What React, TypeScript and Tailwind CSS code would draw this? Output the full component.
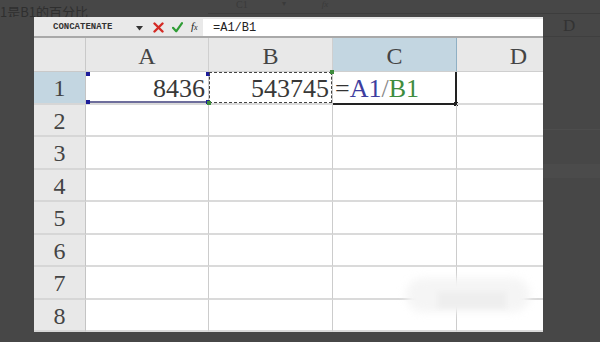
import React from "react";

const serif = { fontFamily: '"Liberation Serif", "Times New Roman", serif' };
const mono = { fontFamily: '"Liberation Mono", "Courier New", monospace' };

const cols = ["A", "B", "C", "D"];
const rows = [1, 2, 3, 4, 5, 6, 7, 8];

function Toolbar() {
  return (
    <div className="flex h-[21px] items-stretch border-b-2 border-[#a9a9a9] bg-[#e9e9e9]">
      <div className="flex w-[100px] items-center pl-[19px] pt-[1px]">
        <span className="text-[9px] font-bold leading-none text-[#333]" style={mono}>
          CONCATENATE
        </span>
      </div>
      <div className="flex w-[69px] items-center gap-[8px]">
        <svg width="7" height="5" viewBox="0 0 7 5" className="ml-[2px] mr-[2px] mt-[3px]">
          <path d="M0 0 L7 0 L3.5 4.5 Z" fill="#333" />
        </svg>
        <svg width="11" height="11" viewBox="0 0 11 11" className="mt-[1px]">
          <path d="M1.5 1.5 L9.5 9.5 M9.5 1.5 L1.5 9.5" stroke="#d42a24" strokeWidth="2.4" strokeLinecap="round" />
        </svg>
        <svg width="11" height="11" viewBox="0 0 11 11" className="mt-[1px]">
          <path d="M1 5.8 L4.2 9.3 L10 1.2" stroke="#2f9d35" strokeWidth="2.2" fill="none" strokeLinecap="round" strokeLinejoin="round" />
        </svg>
        <span className="text-[11px] italic leading-none text-[#222]" style={serif}>
          f<span className="text-[8px]">x</span>
        </span>
      </div>
      <div className="mt-[2px] flex flex-1 items-center bg-white pl-[10px]">
        <span className="text-[12px] leading-none text-[#222]" style={mono}>
          =A1/B1
        </span>
      </div>
    </div>
  );
}

function Handle({ className }: { className: string }) {
  return <div className={"absolute h-[4px] w-[4px] " + className} />;
}

function Sheet() {
  return (
    <div className="relative flex-1 overflow-hidden">
      <div className="grid w-[620px] grid-cols-[52px_123px_124px_124px_124px] grid-rows-[34px_repeat(8,32.5px)]">
        <div className="border-b border-r border-[#c9c9c9] bg-[#e8e8e8]" />
        {cols.map((c) => (
          <div
            key={c}
            className={
              "flex items-center justify-center border-b border-r border-[#cfcfcf] pt-[3px] text-[24px] leading-none text-[#444] " +
              (c === "C" ? "bg-[#c3d6e1] border-r-[#8fb0c4]" : "bg-[#e8e8e8]")
            }
          >
            {c}
          </div>
        ))}
        {rows.map((r) => (
          <React.Fragment key={r}>
            <div
              className={
                "flex items-center justify-center border-b-2 border-r border-b-[#d6d6d6] border-r-[#c4c4c4] pt-[2px] text-[24px] leading-none text-[#444] " +
                (r === 1 ? "bg-[#c3d6e1]" : "bg-[#e8e8e8]")
              }
            >
              {r}
            </div>
            {cols.map((c) => (
              <div
                key={c}
                className="relative flex items-center border-b-2 border-r border-b-[#dadada] border-r-[#cccccc] text-[26px] leading-none text-[#383838]"
              >
                {r === 1 && c === "A" && (
                  <>
                    <span className="ml-auto mr-[3px] pt-[3px]">8436</span>
                    <div className="pointer-events-none absolute inset-0 border-b-2 border-[#6e6e9c]">
                      <Handle className="left-0 top-0 bg-[#1d1d9a]" />
                      <Handle className="right-[-2px] top-0 bg-[#1d1d9a]" />
                      <Handle className="bottom-[-3px] left-0 bg-[#1d1d9a]" />
                      <Handle className="bottom-[-3px] right-[-2px] bg-[#1d1d9a]" />
                    </div>
                  </>
                )}
                {r === 1 && c === "B" && (
                  <>
                    <span className="ml-auto mr-[3px] pt-[3px]">543745</span>
                    <div className="pointer-events-none absolute inset-0 border border-dashed border-[#444]">
                      <Handle className="bottom-[-3px] left-[-3px] bg-[#3e8c3e]" />
                      <Handle className="right-[-3px] top-[-3px] bg-[#3e8c3e]" />
                    </div>
                  </>
                )}
                {r === 1 && c === "C" && (
                  <>
                    <span className="ml-[2px] pt-[3px]">
                      <span className="text-[#333]">=</span>
                      <span className="text-[#3d3d9e]">A1</span>
                      <span className="text-[#888]">/</span>
                      <span className="text-[#3e8c3e]">B1</span>
                    </span>
                    <div className="pointer-events-none absolute inset-[0_-1px_-2px_0] border-b-2 border-r-2 border-[#222]">
                      <div className="absolute bottom-[-3px] right-[-3px] h-[4px] w-[4px] bg-[#222]" />
                    </div>
                  </>
                )}
              </div>
            ))}
          </React.Fragment>
        ))}
      </div>
      {/* blurred watermark lying over the grid */}
      <div className="pointer-events-none absolute left-[372px] top-[240px] h-[34px] w-[124px] rounded-full bg-[#f5f5f5] blur-[4px]" />
      <div className="pointer-events-none absolute left-[404px] top-[254px] h-[16px] w-[68px] bg-[#eeeeee] blur-[2px]" />
    </div>
  );
}

export default function App() {
  return (
    <div className="flex h-[342px] w-[600px] flex-col overflow-hidden bg-[#474747]" style={serif}>
      {/* ghost strip behind, above the panel */}
      <div className="flex h-[17px] items-end overflow-hidden">
        <span
          className="mb-[-1px] w-[208px] text-[13px] leading-none text-[#2f2f2f]"
          style={{ fontFamily: '"Noto Sans CJK SC", "Liberation Sans", sans-serif' }}
        >
          1是B1的百分比
        </span>
        <div className="mb-[3px] flex flex-1 items-start border-b border-[#3d3d3d] pb-[3px] text-[10px] leading-none text-[#3a3a3a]">
          <span className="ml-[28px]">C1</span>
          <span className="ml-[34px] text-[8px]">▾</span>
          <span className="ml-[36px] text-[9px] italic">fx</span>
        </div>
      </div>

      <div className="flex flex-1">
        <div className="ml-[34px] flex h-[315px] w-[509px] flex-col overflow-hidden bg-white">
          <Toolbar />
          <Sheet />
        </div>
        {/* ghost strip to the right */}
        <div className="flex flex-1 flex-col">
          <div className="flex h-[20px] items-start border-b border-[#3f3f3f] pl-[20px] text-[17px] leading-none text-[#333]">
            D
          </div>
          <div className="mt-[92px] h-[1px] bg-[#4d4d4d]" />
          <div className="mt-[34px] h-[14px] bg-[#4b4b4b]" />
        </div>
      </div>
    </div>
  );
}
